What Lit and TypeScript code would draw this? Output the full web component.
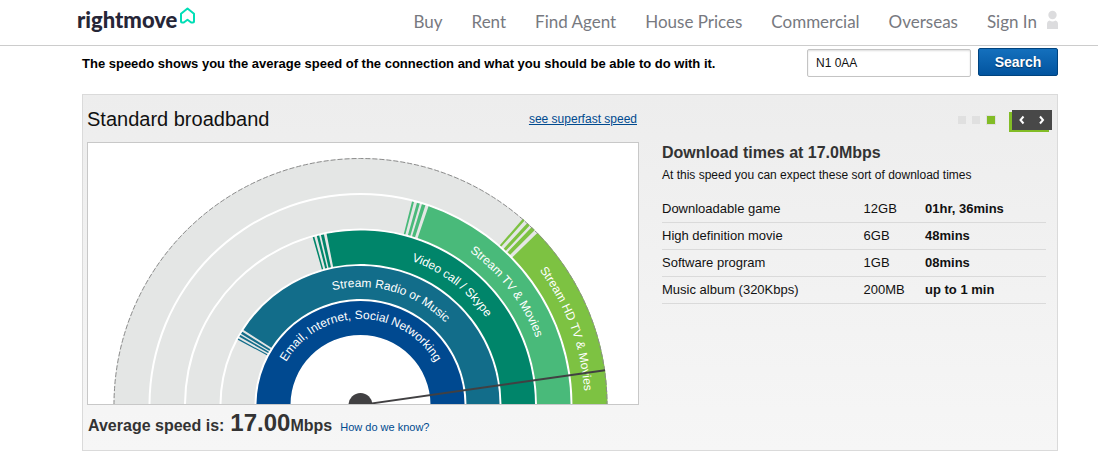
import { LitElement, html, svg, css } from "lit";
import { customElement, property } from "lit/decorators.js";

interface Band {
  label: string;
  color: string;
  inner: number;
  outer: number;
  start: number;
  text: number;
  baseline: number;
}

const CX = 272.5;
const CY = 262;
const NEEDLE = 171.9;

const BANDS: Band[] = [
  { label: "Email, Internet, Social Networking", color: "#004990", inner: 70, outer: 104, start: 0, text: 30, baseline: 86 },
  { label: "Stream Radio or Music", color: "#126d8a", inner: 106, outer: 139, start: 32.7, text: 76.5, baseline: 118 },
  { label: "Video call / Skype", color: "#00856a", inner: 141, outer: 174.5, start: 78.8, text: 109.5, baseline: 153 },
  { label: "Stream TV & Movies", color: "#49ba7a", inner: 176.5, outer: 210, start: 108.9, text: 125.5, baseline: 188 },
  { label: "Stream HD TV & Movies", color: "#7dc242", inner: 212, outer: 247, start: 135.8, text: 143, baseline: 224 },
];

// Angles are degrees clockwise from the left end of the dial.
const point = (r: number, deg: number) => {
  const a = (deg * Math.PI) / 180;
  return `${(CX - r * Math.cos(a)).toFixed(2)} ${(CY - r * Math.sin(a)).toFixed(2)}`;
};
const sector = (r0: number, r1: number, from: number, to: number) =>
  `M${point(r1, from)}A${r1} ${r1} 0 0 1 ${point(r1, to)}L${point(r0, to)}A${r0} ${r0} 0 0 0 ${point(r0, from)}Z`;
const arc = (r: number, from: number, to: number) =>
  `M${point(r, from)}A${r} ${r} 0 0 1 ${point(r, to)}`;

@customElement("speed-dial")
export class SpeedDial extends LitElement {
  static styles = css`
    :host { display: block; border: 1px solid #c8c8c8; background: #fff; }
    .dial { display: block; width: 100%; height: auto; }
    .label { font: 12px "Liberation Sans", Arial, sans-serif; fill: #fff; }
  `;

  private band(b: Band, i: number) {
    const stripes = [[4.7, 4.15], [3.3, 2.5], [1.9, 0.9]];
    return svg`
      <path d=${sector(b.inner, b.outer, 0, 180)} fill="#e4e6e5"></path>
      <path d=${sector(b.inner, b.outer, b.start, 180)} fill=${b.color}></path>
      ${b.start > 0
        ? stripes.map(([a, z]) => svg`<path d=${sector(b.inner, b.outer, b.start - a, b.start - z)} fill=${b.color}></path>`)
        : null}
      <path id=${"arc" + i} d=${arc(b.baseline, b.text, 190)} fill="none"></path>
      <text class="label"><textPath href=${"#arc" + i}>${b.label}</textPath></text>`;
  }

  render() {
    return html`<svg class="dial" viewBox="0 0 550 261" role="img" aria-label="Speed dial">
      ${BANDS.map((b, i) => this.band(b, i))}
      <path d=${arc(246.5, 0, 180)} fill="none" stroke="#8c8c8c" stroke-dasharray="5 2"></path>
      <path d="M${point(8, NEEDLE)}L${point(247, NEEDLE)}" stroke="#414042" stroke-width="2"></path>
      <circle cx=${CX} cy=${CY} r="12" fill="#414042"></circle>
    </svg>`;
  }
}

@customElement("site-header")
export class SiteHeader extends LitElement {
  static styles = css`
    :host { display: block; border-bottom: 1px solid #ccc; background: #fff; }
    .bar { display: flex; justify-content: space-between; align-items: center; height: 45px; padding: 0 39px 0 77px; }
    .logo { display: flex; align-items: center; gap: 2px; color: #262637; text-decoration: none; font: 900 22px/24px Lato, sans-serif; padding-bottom: 6px; }
    .house { width: 17px; height: 18px; padding-bottom: 8px; }
    .nav { display: flex; align-items: center; gap: 29px; padding-bottom: 2px; }
    .link { display: flex; align-items: center; gap: 9px; color: #777980; text-decoration: none; font: 17px/20px Lato, sans-serif; }
    .user { width: 13px; height: 20px; padding-bottom: 4px; }
  `;
  render() {
    const items = ["Buy", "Rent", "Find Agent", "House Prices", "Commercial", "Overseas"];
    return html`<header class="bar">
      <a class="logo" href="#">rightmove<svg class="house" viewBox="0 0 17 18"><path d="M2 6.8 8.5 1.5 15 6.8V14.5Q15 15.5 14 15.5H12.2L8.5 12.8 4.8 15.5H3Q2 15.5 2 14.5Z" fill="none" stroke="#00deb6" stroke-width="2" stroke-linejoin="round"></path></svg></a>
      <nav class="nav">
        ${items.map((t) => html`<a class="link" href="#">${t}</a>`)}
        <a class="link" href="#">Sign In<svg class="user" viewBox="0 0 13 20"><circle cx="6.5" cy="5" r="4.2" fill="#dcdcde"></circle><path d="M1 19V14Q1 11 3.5 10.5Q6.500 12.500 9.500 10.500Q12 11 12 14V19Z" fill="#dcdcde"></path></svg></a>
      </nav>
    </header>`;
  }
}

@customElement("download-times")
export class DownloadTimes extends LitElement {
  @property() speed = "17.0";
  static styles = css`
    :host { display: block; color: #111; }
    .title { margin: 0; color: #333; font-size: 16px; line-height: 20px; font-weight: bold; }
    .intro { margin: 4px 0 13px; font-size: 12px; line-height: 16px; }
    .times { width: 100%; border-collapse: collapse; table-layout: fixed; font-size: 13px; line-height: 18px; }
    .name, .size, .time { padding: 4px 0; text-align: left; font-weight: normal; border-bottom: 1px solid #dadada; }
    .name { width: 52.5%; }
    .size { width: 16%; }
    .time { font-weight: bold; }
  `;
  render() {
    const rows = [
      ["Downloadable game", "12GB", "01hr, 36mins"],
      ["High definition movie", "6GB", "48mins"],
      ["Software program", "1GB", "08mins"],
      ["Music album (320Kbps)", "200MB", "up to 1 min"],
    ];
    return html`<h3 class="title">Download times at ${this.speed}Mbps</h3>
      <p class="intro">At this speed you can expect these sort of download times</p>
      <table class="times">
        <tbody>
          ${rows.map(([n, s, t]) => html`<tr><th class="name" scope="row">${n}</th><td class="size">${s}</td><td class="time">${t}</td></tr>`)}
        </tbody>
      </table>`;
  }
}

@customElement("app-root")
export class AppRoot extends LitElement {
  static styles = css`
    :host { display: block; min-height: 100vh; background: #fff; color: #111; font-family: "Liberation Sans", Arial, sans-serif; }
    .page { padding: 2px 40px 12px 82px; }
    .top { display: flex; align-items: center; justify-content: space-between; }
    .tagline { margin: 0; padding-top: 2px; font-size: 13px; line-height: 18px; color: #000; }
    .search { display: flex; align-items: flex-start; gap: 7px; }
    .postcode { box-sizing: border-box; width: 164px; height: 28px; margin: 1px 0 0; padding: 0 8px; border: 1px solid #c4c4c4; border-radius: 2px; box-shadow: inset 0 1px 2px #ddd; background: #fff; color: #111; font: 12px "Liberation Sans", Arial, sans-serif; }
    .submit { width: 80px; height: 28px; padding: 0; border: 1px solid #00437e; border-radius: 2px; background: linear-gradient(#1470bd, #02549f); color: #fff; font: bold 14px "Liberation Sans", Arial, sans-serif; text-shadow: 0 1px 1px #003462; }
    .panel { display: flex; gap: 23px; margin-top: 17px; padding: 14px 5px 10px 4px; border: 1px solid #dadada; background: linear-gradient(#ededed, #f6f6f6); }
    .left { flex: 552 1 0; min-width: 0; }
    .right { flex: 390 1 0; min-width: 0; }
    .heading { display: flex; align-items: center; justify-content: space-between; height: 20px; margin-bottom: 13px; padding-right: 2px; }
    .title { margin: 0; font-size: 20px; line-height: 20px; font-weight: normal; }
    .link { color: #004a8f; font-size: 12px; line-height: 16px; }
    .average { display: flex; align-items: baseline; margin: 4px 0 0; padding-left: 1px; color: #333; font-size: 16px; line-height: 28px; font-weight: bold; }
    .value { margin-left: 6px; font-size: 24px; }
    .plain { margin-left: 8px; font-size: 11px; font-weight: normal; text-decoration: none; }
    .controls { display: flex; align-items: center; justify-content: flex-end; height: 20px; margin: 1px 0 13px; }
    .dots { display: flex; align-items: center; gap: 6px; margin-right: 17px; }
    .dot { width: 8px; height: 8px; background: #e0e0e0; }
    .dot.on { background: #82bc26; outline: 1px solid #e0e0e0; margin-left: 1px; }
    .arrows { display: flex; background: #484848; box-shadow: -3px 2px 0 #82bc26; }
    .arrow { width: 20px; height: 20px; padding: 0; border: 0; background: none; }
    .chevron { display: block; width: 20px; height: 20px; }
    .details { display: block; padding-right: 6px; }
  `;

  render() {
    const chevron = (d: string) =>
      html`<svg class="chevron" viewBox="0 0 20 20"><path d=${d} fill="none" stroke="#fff" stroke-width="2"></path></svg>`;
    return html`<site-header></site-header>
      <main class="page">
        <div class="top">
          <p class="tagline"><strong>The speedo shows you the average speed of the connection and what you should be able to do with it.</strong></p>
          <form class="search" @submit=${(e: Event) => e.preventDefault()}>
            <input class="postcode" type="text" aria-label="Postcode" value="N1 0AA" />
            <button class="submit" type="submit">Search</button>
          </form>
        </div>
        <section class="panel">
          <div class="left">
            <div class="heading">
              <h2 class="title">Standard broadband</h2>
              <a class="link" href="#">see superfast speed</a>
            </div>
            <speed-dial></speed-dial>
            <p class="average">Average speed is: <span class="value">17.00</span>Mbps <a class="link plain" href="#">How do we know?</a></p>
          </div>
          <div class="right">
            <div class="controls">
              <div class="dots"><span class="dot"></span><span class="dot"></span><span class="dot on"></span></div>
              <div class="arrows">
                <button class="arrow" type="button" aria-label="Previous">${chevron("M11.500 6.500 8.500 10 11.500 13.500")}</button>
                <button class="arrow" type="button" aria-label="Next">${chevron("M8 6.500 11 10 8 13.500")}</button>
              </div>
            </div>
            <download-times class="details" speed="17.0"></download-times>
          </div>
        </section>
      </main>`;
  }
}
